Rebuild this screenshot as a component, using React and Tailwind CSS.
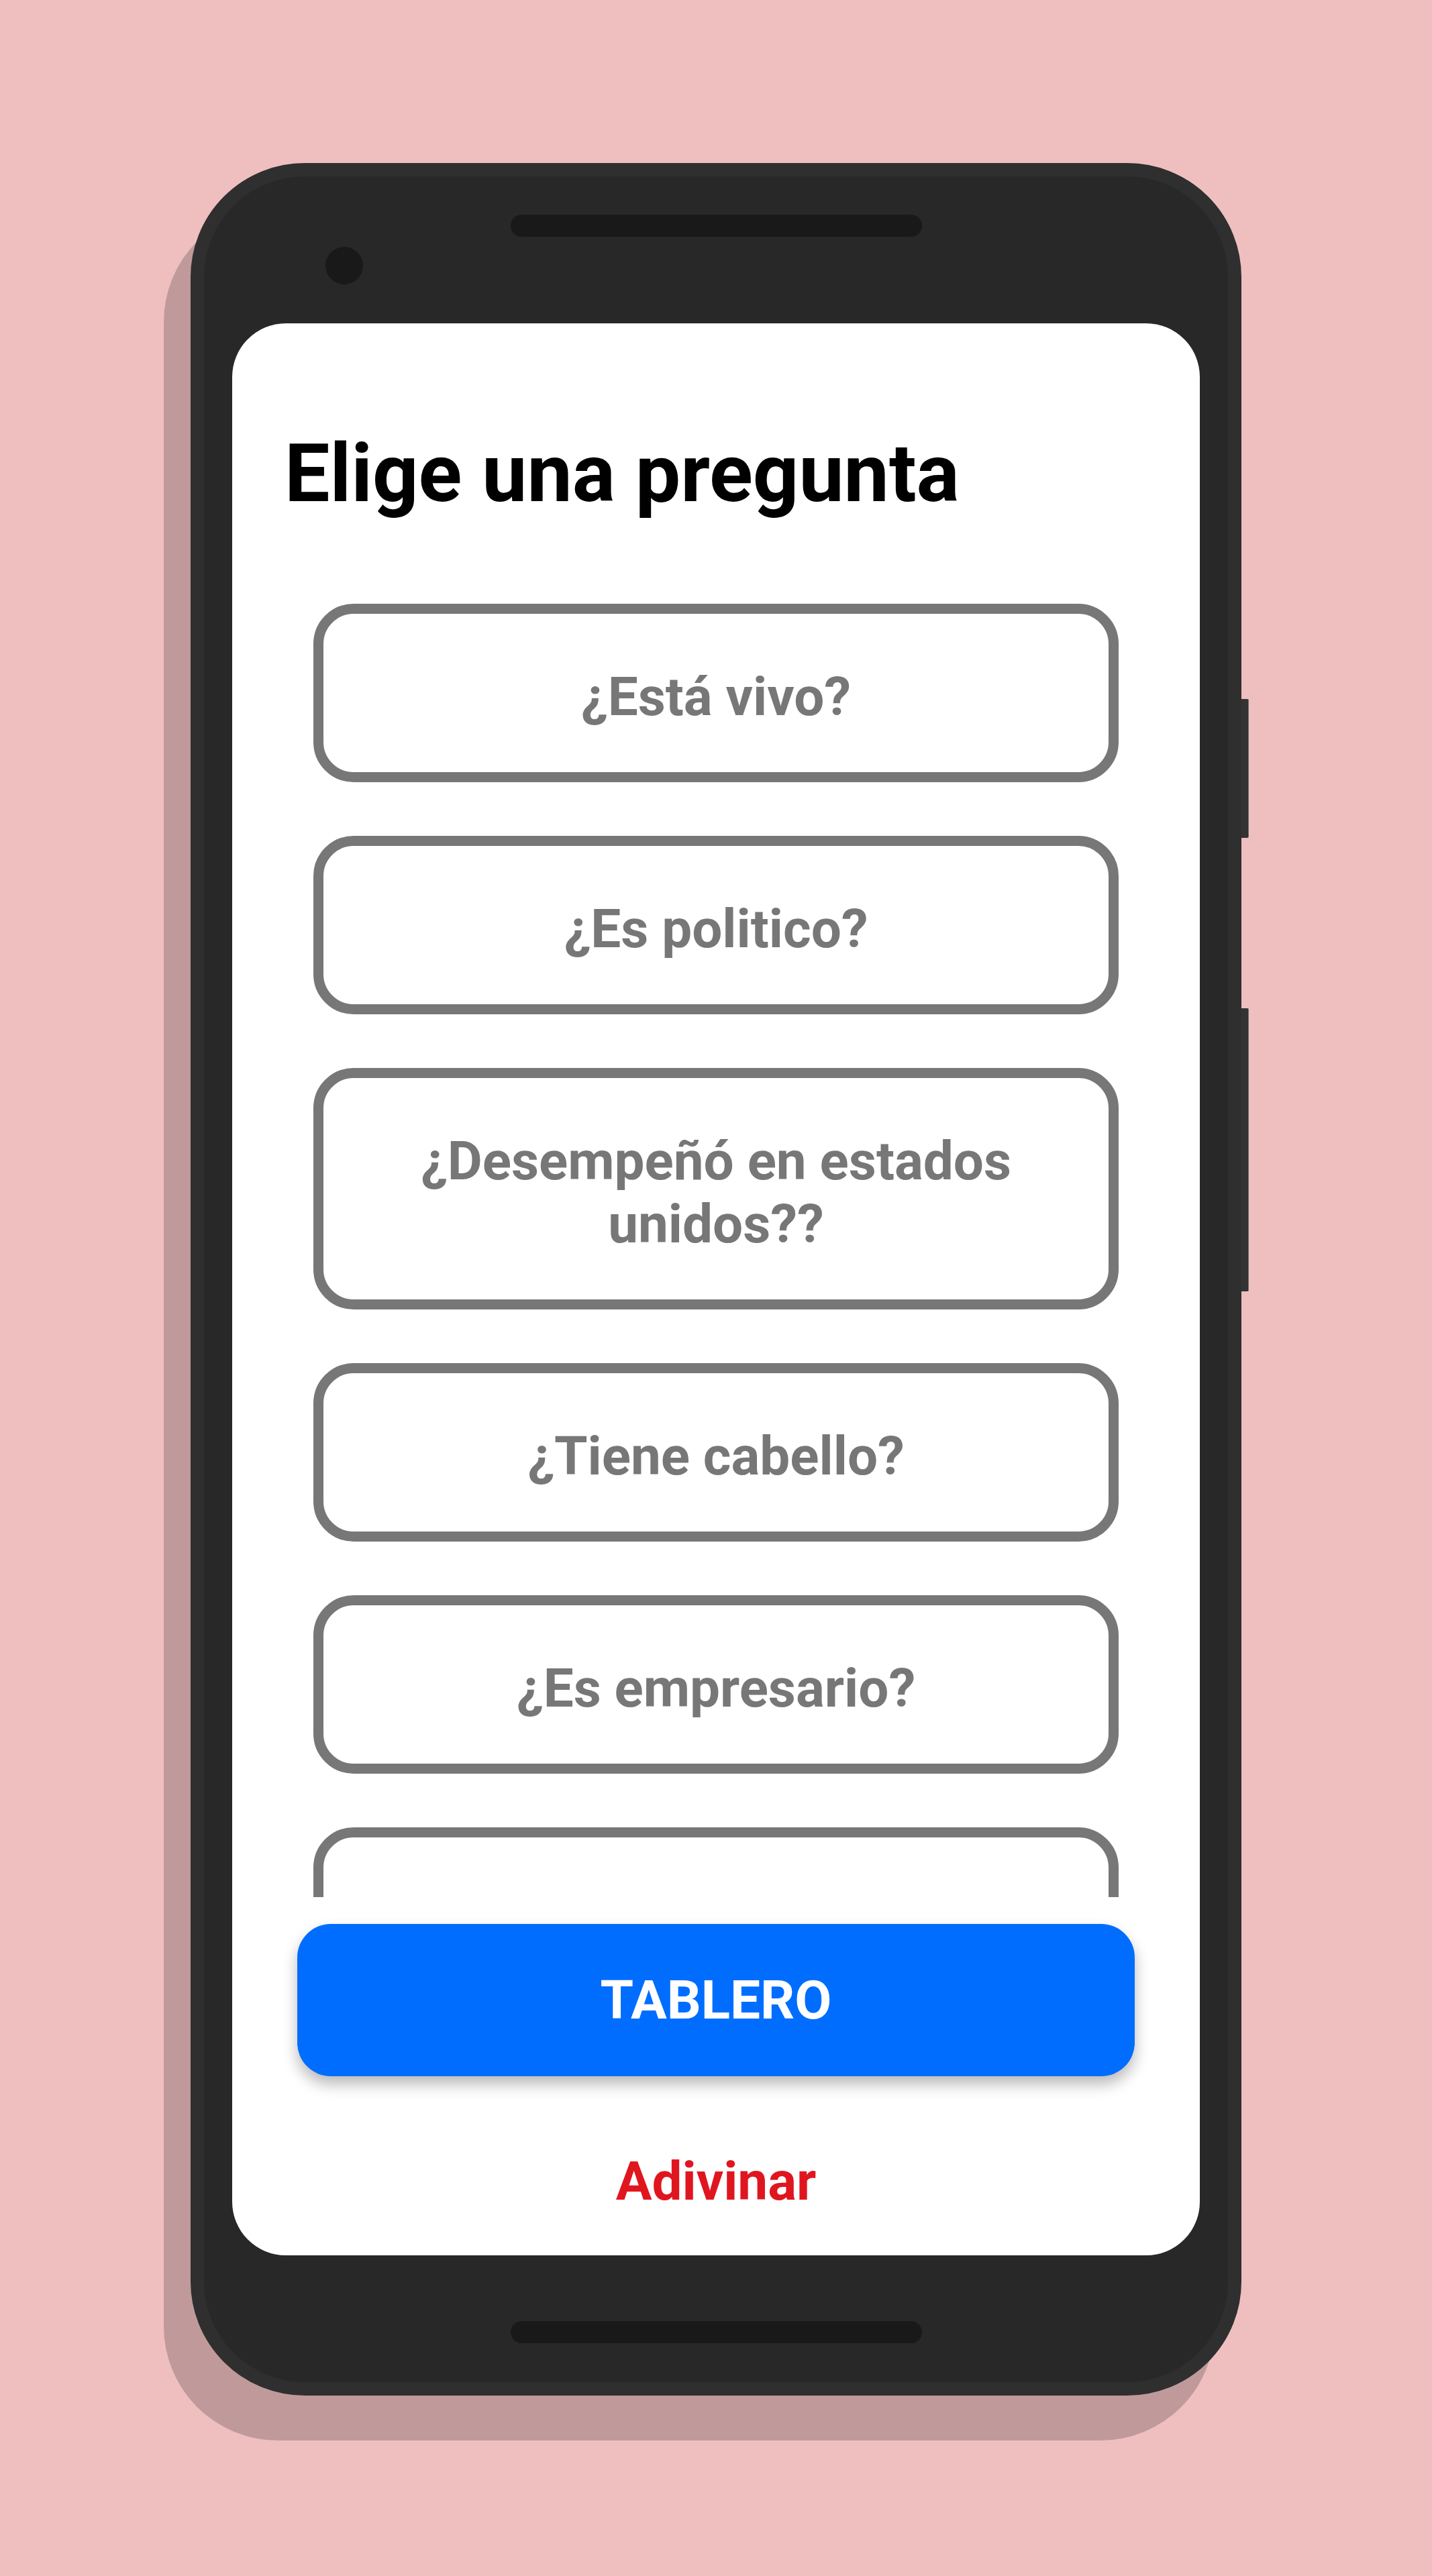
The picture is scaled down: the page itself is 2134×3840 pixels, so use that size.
import React from "react";

const preguntas = [
  "¿Está vivo?",
  "¿Es politico?",
  "¿Desempeñó en estados unidos??",
  "¿Tiene cabello?",
  "¿Es empresario?",
  "\u00a0",
];

function Pregunta({ texto }) {
  return (
    <button className="mx-[121px] shrink-0 rounded-[60px] border-[15px] border-[#777777] bg-white px-[20px] pt-[77px] pb-[65px] text-center text-[80px] font-bold leading-[94px] text-[#777777]">
      {texto}
    </button>
  );
}

export default function App() {
  return (
    <div className="flex min-h-screen justify-center bg-[#efbfc0] pt-[243px] pb-[269px] font-['Roboto',sans-serif]">
      <div className="relative h-[3328px] w-[1566px]">
        {/* sombra del teléfono */}
        <div className="absolute inset-0 translate-x-[-40px] translate-y-[67px] rounded-[170px] bg-[#c09a9b]" />
        {/* botones laterales */}
        <div className="absolute right-[-11px] top-[799px] h-[207px] w-[11px] rounded-r-[2px] border-r border-[#6f6f6f] bg-[#333333]" />
        <div className="absolute right-[-11px] top-[1260px] h-[422px] w-[11px] rounded-r-[2px] border-r border-[#6f6f6f] bg-[#333333]" />

        <div className="relative flex h-full flex-col items-center rounded-[170px] border-[20px] border-[#2f2f2f] bg-[#282828]">
          <div className="relative h-[219px] w-full">
            <div className="mx-auto mt-[57px] h-[33px] w-[613px] rounded-full bg-[#191919]" />
            <div className="absolute left-[181px] top-[105px] h-[56px] w-[56px] rounded-full bg-[#191919]" />
          </div>

          <div className="flex h-[2880px] w-[1442px] flex-col overflow-hidden rounded-[80px] bg-white">
            <h1 className="pl-[78px] pt-[154px] text-[120px] font-bold leading-[141px] text-black">
              Elige una pregunta
            </h1>
            <div className="flex h-[2051px] shrink-0 flex-col gap-[80px] overflow-hidden pt-[123px]">
              {preguntas.map((p, i) => (
                <Pregunta key={i} texto={p} />
              ))}
            </div>
            <button className="mx-[97px] mt-[40px] h-[227px] shrink-0 rounded-[50px] bg-[#006dff] text-[80px] font-bold text-white shadow-[0_12px_22px_rgba(0,0,0,0.28)]">
              TABLERO
            </button>
            <button className="mt-[110px] self-center text-[80px] font-bold leading-[94px] text-[#e0161f]">
              Adivinar
            </button>
          </div>

          <div className="mt-[98px] h-[33px] w-[613px] rounded-full bg-[#191919]" />
        </div>
      </div>
    </div>
  );
}
